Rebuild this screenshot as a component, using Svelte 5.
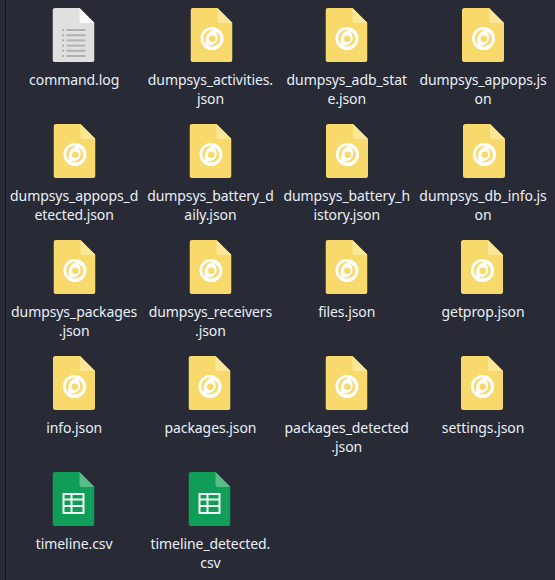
<script>
  const files = [
    ['command.log', 'log', -0.5], ['dumpsys_activities.\njson', 'json', 1.5], ['dumpsys_adb_stat\ne.json', 'json', -0.5], ['dumpsys_appops.js\non', 'json', 0],
    ['dumpsys_appops_d\netected.json', 'json', 0.5], ['dumpsys_battery_d\naily.json', 'json', 0.5], ['dumpsys_battery_h\nistory.json', 'json', 0], ['dumpsys_db_info.js\non', 'json', 1],
    ['dumpsys_packages\n.json', 'json', 0.5], ['dumpsys_receivers\n.json', 'json', 0.5], ['files.json', 'json', -0.5], ['getprop.json', 'json', -1],
    ['info.json', 'json', 0], ['packages.json', 'json', -0.5], ['packages_detected\n.json', 'json', -0.5], ['settings.json', 'json', -1],
    ['timeline.csv', 'csv', -0.5], ['timeline_detected.\ncsv', 'csv', -0.5]
  ];
  const colors = { log: ['#e0e0e0', '#fafafa'], json: ['#f8d96b', '#fbe796'], csv: ['#0f9d58', '#57bb8a'] };
</script>

<div class="view">
  <div class="grid">
    {#each files as [name, kind, dx]}
      <div class="item">
        <svg class="icon" viewBox="0 0 42 54" width="42" height="54" style="translate: {dx}px 0">
          <path d="M2.5 0H27L42 15V51.5A2.5 2.5 0 0 1 39.500 54H2.500A2.500 2.500 0 0 1 0 51.500V2.500A2.500 2.500 0 0 1 2.500 0Z" fill={colors[kind][0]} />
          <path d="M27 0L42 15H29.500A2.500 2.500 0 0 1 27 12.500Z" fill={colors[kind][1]} />
          {#if kind === 'log'}
            <g fill="#b0b0b0">
              {#each [0, 1, 2, 3, 4, 5] as i}
                <rect x="9.500" y={21 + i * 5.200} width="2" height="2" />
                <rect x="14" y={21 + i * 5.200} width="19" height="2" />
              {/each}
            </g>
          {:else if kind === 'json'}
            <circle cx="21.500" cy="30.500" r="11.500" fill="#fff" />
            <path d="M24.500 23.500C29 25 31 30 29.300 34C27.300 38 22 39.500 17 37.500C21 38 25 36 26.500 33C28 29.500 27 26 24.500 23.500Z" fill={colors.json[0]} />
            <path d="M23 21.500C17.500 21 13 25 12.800 30C12.700 33 13.800 35 15.500 36.800C14.800 33.500 14.800 30 16.500 27C18 24.500 20.500 22.500 23 21.500Z" fill={colors.json[0]} />
            <circle cx="21.800" cy="30.700" r="3.300" fill={colors.json[0]} />
          {:else}
            <path fill-rule="evenodd" fill="#f1fbf5" d="M10 21H32V42H10ZM12 23V26.500H18V23ZM20 23V26.500H30V23ZM12 28.500V33H18V28.500ZM20 28.500V33H30V28.500ZM12 35V40H18V35ZM20 35V40H30V35Z" />
          {/if}
        </svg>
        <div class="label">{name}</div>
      </div>
    {/each}
  </div>
</div>

<style>
  :global(body) {
    margin: 0;
    background: #282a36;
  }
  .view {
    width: 555px;
    height: 580px;
    box-sizing: border-box;
    overflow: hidden;
    background: #282a36;
    padding-left: 6px;
    font-family: "Noto Sans", sans-serif;
    position: relative;
  }
  .view::before {
    content: "";
    position: absolute;
    left: 5px;
    top: 0;
    bottom: 0;
    width: 1px;
    background: #16171d;
  }
  .grid {
    display: grid;
    grid-template-columns: repeat(4, 136.300px);
    grid-auto-rows: 116px;
    padding-top: 8px;
  }
  .item {
    display: flex;
    flex-direction: column;
    align-items: center;
  }
  .icon {
    display: block;
  }
  .label {
    margin-top: 8px;
    color: #e8f0f8;
    font-size: 14px;
    letter-spacing: -0.08px;
    line-height: 19px;
    text-align: center;
    white-space: pre-line;
  }
</style>
